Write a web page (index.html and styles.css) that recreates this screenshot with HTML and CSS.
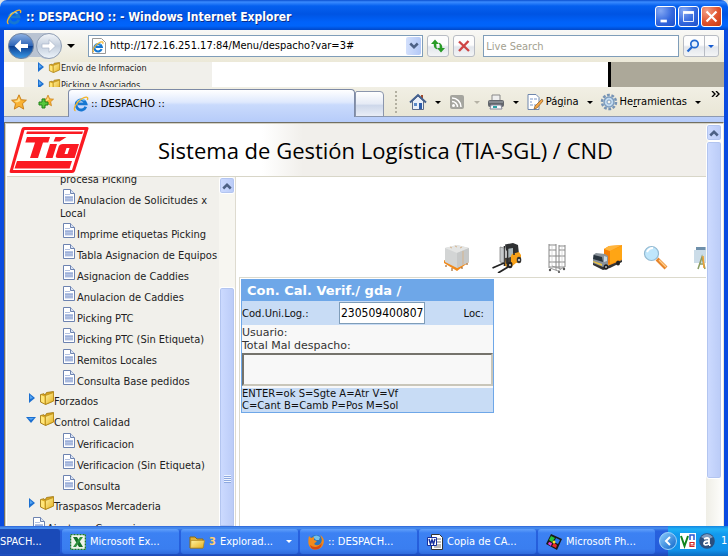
FILE: index.html
```
<!DOCTYPE html>
<html lang="es">
<head>
<meta charset="utf-8">
<title>:: DESPACHO ::</title>
<link rel="stylesheet" href="styles.css">
</head>
<body>
<svg class="defs" aria-hidden="true">
  <defs>
    <linearGradient id="gold" x1="0" y1="0" x2="1" y2="1"><stop offset="0" stop-color="#fff3a0"/><stop offset="1" stop-color="#e5ae1c"/></linearGradient>
    <linearGradient id="navy" x1="0" y1="0" x2="0" y2="1"><stop offset="0" stop-color="#8fb2e4"/><stop offset=".48" stop-color="#2f66b8"/><stop offset=".52" stop-color="#0b3f92"/><stop offset="1" stop-color="#3c9be8"/></linearGradient>
    <linearGradient id="silver" x1="0" y1="0" x2="0" y2="1"><stop offset="0" stop-color="#f3f6fa"/><stop offset=".5" stop-color="#c3cedd"/><stop offset="1" stop-color="#eef5fb"/></linearGradient>
    <linearGradient id="tray" x1="0" y1="0" x2="1" y2="1"><stop offset="0" stop-color="#8fd0ff"/><stop offset="1" stop-color="#0a62c8"/></linearGradient>
    <symbol id="ie" viewBox="0 0 16 16">
      <path d="M12.800 10.800A5 5 0 1 1 13 7.800H5" fill="none" stroke="#1677d2" stroke-width="2.800"/>
      <path d="M4 6.200A5 5 0 0 1 11.500 4.500" fill="none" stroke="#79cbff" stroke-width="1.200"/>
      <path d="M2.500 14.800C-.5 13.500 3 6.500 8.500 3C12.500.3 16 .5 14.300 4" fill="none" stroke="#f2b42c" stroke-width="1.400"/>
    </symbol>
    <symbol id="folder" viewBox="0 0 14 14">
      <path d="M.5 3.500l3.500-.8L5 4l1.500-2.500L13.500.500v9.500l-8 3.500L.5 11z" fill="#d9a520" stroke="#9c7510" stroke-width=".8"/>
      <path d="M5.500 4.500l8-3v8.500l-8 3.300z" fill="url(#gold)" stroke="#b18613" stroke-width=".7"/>
      <path d="M1 4l3.500 1.500V12.500L1 10.500z" fill="#ffe678"/>
    </symbol>
    <symbol id="page" viewBox="0 0 12 15">
      <path d="M.5.500h7l4 4v10H.5z" fill="#fff" stroke="#6d83b0"/>
      <path d="M7.500.500v4h4" fill="#dbe4f4" stroke="#6d83b0"/>
      <path d="M2 7h8v5.500H2z" fill="#b4c3e4"/><path d="M2 5.500h5M2 8.500h8M2 11h8" stroke="#93a7d2" stroke-width=".7"/>
    </symbol>
    <symbol id="right" viewBox="0 0 6 10"><path d="M0 0l6 5-6 5z" fill="#1b6fd0"/><path d="M1 2l3 3-3 1z" fill="#58a6f2"/></symbol>
    <symbol id="down" viewBox="0 0 10 6"><path d="M0 0h10L5 6z" fill="#1b6fd0"/><path d="M2 1h6L5 3z" fill="#58a6f2"/></symbol>
    <symbol id="caret" viewBox="0 0 6 3"><path d="M0 0h6L3 3z" fill="currentColor"/></symbol>
    <symbol id="up" viewBox="0 0 8 6"><path d="M1 5l3-3 3 3" fill="none" stroke="#4d6185" stroke-width="2"/></symbol>
    <symbol id="chevron" viewBox="0 0 8 6"><path d="M1 1l3 3 3-3" fill="none" stroke="#4d6185" stroke-width="2"/></symbol>
    <symbol id="star" viewBox="0 0 16 16"><path d="M8 .8l2.200 4.900 5.200.5-3.900 3.500 1.200 5.400L8 12.300l-4.700 2.800 1.200-5.400L.6 6.200l5.200-.5z" fill="#f9b233" stroke="#c77a10" stroke-width=".9"/><path d="M8 3l1.300 4L6 8.500 3 7l3.400-.5z" fill="#ffe08a"/></symbol>
  </defs>
</svg>

<div class="window">
  <header class="titlebar">
    <svg class="i16"><use href="#ie"/></svg>
    <h1>:: DESPACHO :: - Windows Internet Explorer</h1>
    <div class="winbuttons">
      <button class="wb" aria-label="Minimizar"><svg viewBox="0 0 21 21"><path d="M5 14h7v3H5z" fill="#fff"/></svg></button>
      <button class="wb" aria-label="Maximizar"><svg viewBox="0 0 21 21"><path d="M5 6.500h11v9.500H5z" fill="none" stroke="#fff"/><path d="M4.500 4.500h12v3h-12z" fill="#fff"/></svg></button>
      <button class="wb close" aria-label="Cerrar"><svg viewBox="0 0 21 21"><path d="M5 5l11 11M16 5L5 16" stroke="#fff" stroke-width="2.400"/></svg></button>
    </div>
  </header>

  <div class="chrome">
    <form class="navbar">
      <button type="button" class="travel" aria-label="Atrás y adelante">
        <svg viewBox="0 0 56 28">
          <path d="M14 1h28q6 0 6 13t-6 13-8-2H22q-2 2-8 2z" fill="#b9c3d2"/>
          <circle cx="14" cy="14" r="12.500" fill="url(#navy)" stroke="#71839f"/>
          <path d="M7.500 14l6.500-6.300v4.300h7v4h-7v4.300z" fill="#fff"/>
          <circle cx="42" cy="14" r="12.500" fill="url(#silver)" stroke="#8f9db3"/>
          <path d="M48.500 14L42 7.700V12h-7v4h7v4.300z" fill="#fff" stroke="#aab6c8" stroke-width=".7"/>
        </svg>
      </button>
      <svg class="caret big"><use href="#caret"/></svg>
      <div class="address">
        <svg class="i16" viewBox="0 0 16 16"><path d="M1.500.500h9l4 4v11h-13z" fill="#fff" stroke="#999"/><use href="#ie" x="1" y="3" width="12" height="12"/></svg>
        <input type="text" aria-label="Dirección" value="http://172.16.251.17:84/Menu/despacho?var=3#">
        <button type="button" class="combo" aria-label="Historial"><svg class="chev"><use href="#chevron"/></svg></button>
      </div>
      <button type="button" class="tool" aria-label="Actualizar"><svg class="i16" viewBox="0 0 16 16"><path d="M5 1.500L1 6h2.700q-.2 4.500 3.800 5.500Q6 9.500 6.300 6H9z" fill="#289b27"/><path d="M11 14.500l4-4.500h-2.700q.2-4.500-3.800-5.500Q10 6.500 9.700 10H7z" fill="#289b27"/></svg></button>
      <button type="button" class="tool" aria-label="Detener"><svg class="i16" viewBox="0 0 16 16"><path d="M3 3.500l10 9.500M12.500 3L3 13" stroke="#ce4545" stroke-width="2.400"/></svg></button>
      <input class="search" type="text" aria-label="Buscar" placeholder="Live Search">
      <button type="button" class="tool find" aria-label="Buscar ahora"><svg class="i16" viewBox="0 0 16 16"><circle cx="9.500" cy="6" r="3.700" fill="#e6f0fc" stroke="#2067d0" stroke-width="1.700"/><path d="M7 9l-4.500 4.500" stroke="#2067d0" stroke-width="2.300"/></svg><span><svg class="caret"><use href="#caret"/></svg></span></button>
    </form>

    <div class="residue">
      <ul class="tree">
        <li><svg class="right"><use href="#right"/></svg><svg class="folder"><use href="#folder"/></svg><a href="#">Envío de Informacion</a></li>
        <li><svg class="right"><use href="#right"/></svg><svg class="folder"><use href="#folder"/></svg><a href="#">Picking y Asociados</a></li>
      </ul>
      <div class="blank"></div>
      <div class="grey"></div>
    </div>

    <div class="tabbar">
      <svg class="i16"><use href="#star"/></svg>
      <svg class="i16 plus" viewBox="0 0 16 16"><use href="#star" x="4" y="0" width="12" height="13"/><path d="M4 5h3v3h3v3H7v3H4v-3H1V8h3z" fill="#55c83c" stroke="#21811a"/></svg>
      <button class="tab"><svg class="i16"><use href="#ie"/></svg>:: DESPACHO ::</button>
      <button class="newtab" aria-label="Nueva ficha"></button>
      <div class="commands">
        <button aria-label="Página principal"><svg class="i18" viewBox="0 0 18 18"><path d="M12 2h2v4h-2z" fill="#a34b2a"/><path d="M3.500 8v8.500h11V8L9 3z" fill="#e9eff8" stroke="#5c6b89"/><path d="M1 9.500L9 2l8 7.500" fill="none" stroke="#44618f" stroke-width="2"/><path d="M10 10h3v6h-3z" fill="#2d5ca8"/><path d="M5 10h3v3H5z" fill="#5b8ac8"/></svg><svg class="caret"><use href="#caret"/></svg></button>
        <button class="off" aria-label="Fuentes"><svg class="i18" viewBox="0 0 18 18"><rect x="2" y="2" width="14" height="14" rx="2" fill="#a5a59f"/><circle cx="5.500" cy="12.500" r="1.500" fill="#fff"/><path d="M4 8.500a5.500 5.500 0 0 1 5.500 5.500M4 5a9 9 0 0 1 9 9" fill="none" stroke="#fff" stroke-width="1.500"/></svg><svg class="caret"><use href="#caret"/></svg></button>
        <button aria-label="Imprimir"><svg class="i18" viewBox="0 0 18 18"><path d="M5 2h8v6H5z" fill="#eee" stroke="#888"/><rect x="1" y="7" width="16" height="7" rx="2" fill="#62666c"/><path d="M2 9h14" stroke="#a9adb3"/><path d="M4 12h10l1 4H3z" fill="#f6fafc" stroke="#889"/><path d="M6 14h4" stroke="#2ea2a5" stroke-width="2"/></svg><svg class="caret"><use href="#caret"/></svg></button>
        <button><svg class="i18" viewBox="0 0 18 18"><path d="M2 1.500h8l3 3v12H2z" fill="#fff" stroke="#6f87ad"/><path d="M4 6h3M4 9h2M4 12h3M8 6h3M8 12h2" stroke="#7a97c8"/><path d="M16 6l-7 7-1 3 3-1 6-7z" fill="#f3a64a" stroke="#8d5a1f" stroke-width=".7"/></svg><span>Pá<u>g</u>ina</span><svg class="caret"><use href="#caret"/></svg></button>
        <button><svg class="i18" viewBox="0 0 18 18"><circle cx="9" cy="9" r="7" fill="none" stroke="#7693b4" stroke-width="2.500" stroke-dasharray="2.800 1.600"/><circle cx="9" cy="9" r="5" fill="#c3dbf0" stroke="#7d9dbf" stroke-width="1.500"/><circle cx="9" cy="9" r="2" fill="#f5f5ef" stroke="#7d9dbf"/></svg><span>He<u>r</u>ramientas</span><svg class="caret"><use href="#caret"/></svg></button>
      </div>
      <button class="more" aria-label="Más"><svg viewBox="0 0 9 6"><path d="M1 0l3 3-3 3M5 0l3 3-3 3" fill="none" stroke="#000" stroke-width="1.400"/></svg></button>
    </div>

    <div class="viewport">
      <div class="doc">
        <div class="banner">
          <svg class="logo" viewBox="0 0 80 48" role="img" aria-label="Tía">
            <path d="M15 1h63q2 0 1.400 2L66 45q-.6 2-3 2H2q-2 0-1.300-2L12.500 3q.6-2 2.500-2z" fill="#fb1a22"/>
            <path d="M15.500 4H75.500L63 44H4z" fill="#fff"/>
            <path d="M18 5.500h56l-.8 2.500H17.200z" fill="#fb1a22"/>
            <path d="M8 35h55l-2.400 7.500H5.500z" fill="#fb1a22"/>
            <path d="M18 11h23l-1.800 5.500H34L29 32h-8l5-15.500h-9.700z" fill="#fb1a22"/>
            <path d="M41 18h7l-4.400 14h-7zM44.500 15.500l2-4.500h11l-7 4.500z" fill="#fb1a22"/>
            <path d="M54 18h16l-4.400 14H49q-3 0-2-3l2.700-8.500q.8-2.500 4.300-2.500zM57.500 22l-2 6h3l2-6z" fill="#fb1a22" fill-rule="evenodd"/>
          </svg>
          <h2>Sistema de Gestión Logística (TIA-SGL) / CND</h2>
        </div>
        <div class="frames">
          <nav class="side">
            <ul class="tree menu">
              <li class="leaf cut"><a href="#">procesa Picking</a></li>
              <li class="leaf wrap"><a href="#"><svg class="page"><use href="#page"/></svg>Anulacion de Solicitudes x Local</a></li>
              <li class="leaf"><a href="#"><svg class="page"><use href="#page"/></svg>Imprime etiquetas Picking</a></li>
              <li class="leaf"><a href="#"><svg class="page"><use href="#page"/></svg>Tabla Asignacion de Equipos</a></li>
              <li class="leaf"><a href="#"><svg class="page"><use href="#page"/></svg>Asignacion de Caddies</a></li>
              <li class="leaf"><a href="#"><svg class="page"><use href="#page"/></svg>Anulacion de Caddies</a></li>
              <li class="leaf"><a href="#"><svg class="page"><use href="#page"/></svg>Picking PTC</a></li>
              <li class="leaf"><a href="#"><svg class="page"><use href="#page"/></svg>Picking PTC (Sin Etiqueta)</a></li>
              <li class="leaf"><a href="#"><svg class="page"><use href="#page"/></svg>Remitos Locales</a></li>
              <li class="leaf"><a href="#"><svg class="page"><use href="#page"/></svg>Consulta Base pedidos</a></li>
              <li><svg class="right"><use href="#right"/></svg><svg class="folder"><use href="#folder"/></svg><a href="#">Forzados</a></li>
              <li><svg class="down"><use href="#down"/></svg><svg class="folder"><use href="#folder"/></svg><a href="#">Control Calidad</a></li>
              <li class="leaf"><a href="#"><svg class="page"><use href="#page"/></svg>Verificacion</a></li>
              <li class="leaf"><a href="#"><svg class="page"><use href="#page"/></svg>Verificacion (Sin Etiqueta)</a></li>
              <li class="leaf"><a href="#"><svg class="page"><use href="#page"/></svg>Consulta</a></li>
              <li><svg class="right"><use href="#right"/></svg><svg class="folder"><use href="#folder"/></svg><a href="#">Traspasos Mercaderia</a></li>
              <li class="leaf root"><a href="#"><svg class="page"><use href="#page"/></svg>Ajustes y Correccion</a></li>
            </ul>
            <div class="scroll inner"><button class="arrow" aria-label="Subir"><svg class="chev"><use href="#up"/></svg></button><div class="track"></div><div class="thumb"><i></i></div></div>
          </nav>
          <main>
            <div class="icons">
              <svg viewBox="0 0 30 30"><path d="M2 20l13 8 12-9v-3L15 24 2 17z" fill="#f18a1b"/><path d="M4 22v2M10 25v3M20 24v2M25 20v2" stroke="#8d4b0a"/><path d="M3 5l12-3 12 3v14l-12 6L3 19z" fill="#d3d5d5"/><path d="M3 5l12-3 12 3-12 5z" fill="#e4e5e4"/><path d="M15 10l12-5v14l-12 6z" fill="#c6c8c8"/><path d="M8 4l2 1M13 3l2 1M20 4l-2 1M21 8v14" stroke="#d5b48e"/></svg>
              <svg viewBox="0 0 30 30"><path d="M13 1.500l8-1.500 5 2 1 9-4-1-5 2-4-5z" fill="#2f3133"/><path d="M15 6l6-1v9h-6z" fill="#a9b6ba"/><path d="M20 11l7-2 2 3v7l-5 1-6 5-5-2v-7l5-1z" fill="#f8a118"/><path d="M13 15l6-1v5l-5 2z" fill="#3f3d38"/><path d="M12.500 3v20M15.500 4v21M22 4v8" stroke="#2c2d2e" stroke-width="1.600"/><path d="M8 4l4 1v15l-4-1z" fill="#c6cacc" stroke="#777" stroke-width=".7"/><path d="M12 20L.5 25M16 24L6 30" stroke="#222" stroke-width="1.800"/><ellipse cx="18" cy="22" rx="2.500" ry="3.200" fill="#222"/><ellipse cx="27" cy="17" rx="2.300" ry="3.200" fill="#333"/><circle cx="27" cy="17" r="1.100" fill="#ddd"/><circle cx="18" cy="22" r="1" fill="#ddd"/></svg>
              <svg viewBox="0 0 30 30"><path d="M7 1v24M14 1v26M17 2v23M23 2v22M7 2h7M17 3h6M7 7h7M17 7h6M7 13h16M7 19h16M7 24h16" stroke="#888" fill="none"/><path d="M10 2v22M20 3v20" stroke="#ccc" stroke-width=".7"/><path d="M8 25l8 3 6-4M10 23l9 3" stroke="#999" fill="none"/><circle cx="8" cy="27" r="1.200" fill="#555"/><circle cx="17" cy="29" r="1" fill="#444"/><circle cx="22" cy="26" r="1.200" fill="#555"/></svg>
              <svg viewBox="0 0 30 30"><path d="M12 6l5-3 13-1v15l-12 6-5-3z" fill="#ff930d"/><path d="M18 8l12-5v13l-12 5z" fill="#ffa514"/><path d="M12 6l6 2v13l-6-2z" fill="#f67d04"/><path d="M12 6l5-3 13-1-12 6z" fill="#ffb53c"/><path d="M1 12l3-2 9 1 3 2v11l-6 2-9-5z" fill="#8a929a"/><path d="M2 12l8 2 1 5-10-3z" fill="#29343e"/><path d="M12 13l3 1v4l-3 1z" fill="#c6d6e2"/><path d="M1 18l9 3v2l-9-4z" fill="#f0c33c"/><path d="M1 20l10 4 7-2 12-5v2l-12 6-7 2-10-5z" fill="#353535"/><ellipse cx="14" cy="24" rx="2.300" ry="2.800" fill="#222"/><ellipse cx="26" cy="20" rx="2" ry="2.600" fill="#222"/><circle cx="14" cy="24" r="1" fill="#bbb"/></svg>
              <svg viewBox="0 0 30 30"><path d="M15 16l9 9" stroke="#e7852c" stroke-width="4"/><path d="M17 17l7 7" stroke="#ffcf8a" stroke-width="1.400"/><circle cx="9.500" cy="10.500" r="7" fill="#bfe6fb" stroke="#94bad2" stroke-width="1.200"/><path d="M5 9q2-4 6-4" stroke="#fff" stroke-width="2" fill="none"/></svg>
              <svg viewBox="0 0 30 30"><path d="M4 4h20v14H4z" fill="#a9bed0"/><path d="M2 7h20v13H2z" fill="#cbdce8"/><path d="M4 4h9v3H4z" fill="#6f90ab"/><path d="M6 26l4-12 3 12M7 21h5" stroke="#8a9d63" stroke-width="1.500" fill="none"/><path d="M11 13l1 12" stroke="#f0a13a" stroke-width="1.500"/></svg>
            </div>
            <div class="work">
              <form class="panel">
                <h3>Con. Cal. Verif./ gda /</h3>
                <div class="code"><label for="cod">Cod.Uni.Log.:</label><input id="cod" type="text" value="230509400807"><span>Loc:</span></div>
                <p class="info">Usuario:<br>Total Mal despacho:</p>
                <textarea aria-label="Mensaje"></textarea>
                <p class="help">ENTER=ok S=Sgte A=Atr V=Vf<br>C=Cant B=Camb P=Pos M=Sol</p>
              </form>
            </div>
          </main>
        </div>
      </div>
      <div class="scroll outer"><button class="arrow" aria-label="Subir"><svg class="chev"><use href="#up"/></svg></button><div class="thumb"></div><div class="track"></div></div>
    </div>
  </div>

  <footer class="taskbar">
    <button class="task active">SPACH...</button>
    <button class="task"><svg class="i16" viewBox="0 0 16 16"><path d="M.5.500h15v15H.5z" fill="#eef5ea" stroke="#1c7a2b" stroke-width="1.600" stroke-dasharray="2 1"/><path d="M3 3h4l6 10H9z" fill="#166f27"/><path d="M13 3h-3L3 13h3z" fill="#2f9140"/></svg><span>Microsoft Ex...</span></button>
    <button class="task"><svg class="i16" viewBox="0 0 16 16"><path d="M1 3h5l2 2h6v9H1z" fill="#e0b23a" stroke="#8d6b14"/><path d="M2 6.500h13.500L14 14H1.500z" fill="url(#gold)" stroke="#b38b25" stroke-width=".7"/></svg><b>3</b><span>Explorad...</span><svg class="caret"><use href="#caret"/></svg></button>
    <button class="task"><svg class="i16" viewBox="0 0 16 16"><circle cx="8" cy="8" r="7" fill="#2a74bd"/><path d="M5 3q3-3 7 0l-1 3-3 0z" fill="#77c3ea"/><path d="M1 2l2 2 3-1 0 3 3 1-3 3q4 3 7-1 2-4-1-8 5 3 3.500 8.500T8 15.500 .5 10Q0 5 1 2z" fill="#f08a1c"/><path d="M2 11q6 5 12-2-1 6-6 6.500T2 11z" fill="#d64a12"/></svg><span>:: DESPACH...</span></button>
    <button class="task"><svg class="i16" viewBox="0 0 16 16"><path d="M4.500.500h8l3 3v12h-11z" fill="#fff" stroke="#333"/><path d="M9 5h5M10 8h4M9 11h5M7 13h7" stroke="#777"/><path d="M.5 3.500h9v8h-9z" fill="#fff" stroke="#17309e"/><path d="M2 5l1.500 5L5 6l1.500 4L8 5" fill="none" stroke="#17309e" stroke-width="1.500"/></svg><span>Copia de CA...</span></button>
    <button class="task"><svg class="i16" viewBox="0 0 16 16"><path d="M5 0l11 5-5 11L0 10z" fill="#191919"/><path d="M5 2l4 2-3 4-3-2z" fill="#25c43d"/><path d="M10 4l4 2-2 4-4-2z" fill="#2878ed"/><path d="M3 8l3 1-1 3-3-2z" fill="#e93bd7"/><path d="M8 9l3 2-1 3-4-2z" fill="#e92b27"/><circle cx="8" cy="8" r="1.500" fill="#f7e52e"/></svg><span>Microsoft Ph...</span></button>
    <div class="traybox">
      <button class="expand" aria-label="Mostrar iconos ocultos"><svg viewBox="0 0 18 18"><circle cx="9" cy="9" r="8.500" fill="url(#tray)" stroke="#9cd2fb"/><path d="M11 5L7 9l4 4" fill="none" stroke="#fff" stroke-width="2"/></svg></button>
      <svg class="i16" viewBox="0 0 16 16"><path d="M0 0h16v16H0z" fill="#fff"/><path d="M1 3l3.500 10L8 3" fill="none" stroke="#12851c" stroke-width="2"/><path d="M10 7V2h4v5" fill="none" stroke="#2b57d3" stroke-width="1.500"/><path d="M14.500 9.500H10v4h4.500M14 9v3h-4" fill="none" stroke="#cf2424" stroke-width="1.200"/></svg>
      <svg class="i16" viewBox="0 0 16 16"><circle cx="8" cy="8" r="7.800" fill="#2b4f7e"/><path d="M2 4q6-6 12 0L8 7z" fill="#7f9cc0"/><path d="M5 6q4-2 5 0v6M10 8q-5 0-5 2.500T10 11M10 12h1.500" fill="none" stroke="#fff" stroke-width="1.800"/></svg>
      <time>1</time>
    </div>
  </footer>
</div>
</body>
</html>
```
FILE: styles.css
```
* { box-sizing: border-box; }

body {
  margin: 0;
  background: #dfe3e6;
  color: #000;
  font: 11px/14px "DejaVu Sans Condensed", "DejaVu Sans", sans-serif;
}

button {
  padding: 0;
  border: 0;
  background: none;
  color: inherit;
  font: inherit;
}

input, textarea { font: inherit; border-radius: 0; }
a { color: #222; text-decoration: none; }
svg { display: block; flex: none; }
ul, p, h1, h2, h3 { margin: 0; padding: 0; }

.defs { position: absolute; width: 0; height: 0; }
.i16 { width: 16px; height: 16px; }
.i18 { width: 18px; height: 18px; }
.caret { width: 6px; height: 3px; }
.caret.big { width: 8px; height: 4px; }
.chev { width: 10px; height: 8px; }

.window {
  display: flex;
  flex-direction: column;
  height: 100vh;
  overflow: hidden;
}

/* Title bar */
.titlebar {
  display: flex;
  flex: none;
  align-items: center;
  gap: 4px;
  height: 30px;
  padding: 3px 6px 0 6px;
  border-radius: 7px 7px 0 0;
  background: linear-gradient(#0a4fd0, #3a8bff 2px, #0560ef 6px, #0054e3 14px, #0062fa 22px, #0064fb 26px, #0047c8);
}
.titlebar h1 {
  flex: 1;
  color: #fff;
  font: bold 12px/16px "DejaVu Sans Condensed", "DejaVu Sans", sans-serif;
  text-shadow: 1px 1px #0a2f8c;
  white-space: nowrap;
}
.winbuttons { display: flex; gap: 2px; }
.wb {
  width: 21px;
  height: 21px;
  border: 1px solid #fff;
  border-radius: 3px;
  background: radial-gradient(circle at 25% 20%, #84a8f3, #3468de 55%, #1c4fc9);
}
.wb svg { width: 19px; height: 19px; }
.wb.close { background: radial-gradient(circle at 25% 20%, #f3a086, #e0532e 55%, #c33a12); }

/* Browser chrome */
.chrome {
  display: flex;
  flex: 1;
  flex-direction: column;
  min-height: 0;
  border: solid #0a4be0;
  border-width: 0 4px;
}
.navbar {
  display: flex;
  flex: none;
  align-items: center;
  gap: 4px;
  height: 32px;
  padding: 0 5px 0 3px;
  background: linear-gradient(#f8f8f6, #ece9d8);
}
.travel { width: 56px; height: 28px; }
.travel svg { width: 56px; height: 28px; }
.address {
  display: flex;
  flex: 336;
  align-items: center;
  height: 22px;
  margin-left: 9px;
  padding: 1px 1px 1px 2px;
  border: 1px solid #7f9db9;
  background: #fff;
}
.address input {
  flex: 1;
  min-width: 0;
  padding: 0 3px;
  border: 0;
}
.combo {
  display: grid;
  place-items: center;
  width: 15px;
  height: 18px;
  border-radius: 2px;
  background: linear-gradient(90deg, #d3e0fc, #b3c8f6);
}
.tool {
  display: flex;
  align-items: center;
  justify-content: center;
  width: 22px;
  height: 22px;
  border: 1px solid #b8bcc4;
  border-radius: 3px;
  background: linear-gradient(#fdfdfd 45%, #e2e6ec 55%, #f4f5f6);
}
.tool.find { width: 36px; gap: 3px; }
.find span {
  display: grid;
  place-items: center;
  width: 14px;
  height: 20px;
  border-left: 1px solid #b8bcc4;
  color: #155ad0;
}
.search {
  flex: 193;
  min-width: 0;
  height: 22px;
  margin-left: 4px;
  padding: 0 2px;
  border: 1px solid #7f9db9;
}
.search::placeholder { color: #a39f90; opacity: 1; }

/* Page strip showing between the two toolbars */
.residue {
  display: flex;
  flex: none;
  height: 25px;
  overflow: hidden;
  background: #fff;
}
.residue .tree { width: 188px; margin-left: 20px; padding-left: 14px; background: #f1f0eb; font-size: 9px; }
.residue .tree li { height: 17px; }
.residue .tree a { padding-top: 0; line-height: 12px; }
.residue .right { margin: 0 4px 0 0; }
.residue .folder { width: 13px; height: 11px; }
.blank { flex: 1; }
.grey { width: 116px; border-left: 3px solid #000; background: #aca899; }

.tabbar {
  display: flex;
  flex: none;
  align-items: center;
  height: 35px;
  padding: 0 4px 5px 7px;
  background: linear-gradient(#f1efe4, #e9e6d6 29px, #8d9ab3 29px, #8d9ab3 30px, #bcd0fa 30px, #b6ccfa);
}
.plus { margin-left: 11px; }
.tab {
  display: flex;
  flex: 1;
  align-items: center;
  align-self: flex-end;
  gap: 2px;
  height: 28px;
  margin-left: 14px;
  padding-left: 4px;
  border: 1px solid #7d8aa6;
  border-bottom: 0;
  border-radius: 4px 4px 0 0;
  background: linear-gradient(#fff, #dfe9fd 45%, #c9dafc 55%, #bcd0fa);
  white-space: nowrap;
}
.newtab {
  align-self: flex-end;
  width: 29px;
  height: 26px;
  border: 1px solid #8b96ad;
  border-radius: 2px 4px 0 0;
  background: linear-gradient(#fff, #e5eaf5 50%, #cdd7ea 55%, #e9edf6);
}
.commands {
  display: flex;
  align-items: center;
  gap: 7px;
  margin: 0 10px 0 11px;
  padding-left: 12px;
  border-left: 2px dotted #b3b0a1;
}
.commands button { display: flex; align-items: center; gap: 2px; height: 22px; }
.commands button > .caret { margin-left: 6px; }
.off { color: #b5b2a5; }
.more { align-self: flex-start; margin-top: 4px; }
.more svg { width: 9px; height: 6px; }

/* Document area */
.viewport {
  display: flex;
  flex: 1;
  min-height: 0;
  border: solid #716f64;
  border-width: 1px 1px 0 1px;
  border-right-color: #ece9d8;
  box-shadow: inset 1px 1px #d5d2c4;
  padding: 1px 1px 0 2px;
  background: #fff;
}
.doc { display: flex; flex: 1; flex-direction: column; min-width: 0; }
.banner {
  display: flex;
  flex: none;
  align-items: center;
  height: 53px;
  border-bottom: 1px solid #d8d6c8;
  padding-left: 2px;
  background: linear-gradient(90deg, #fff 255px, #f1efeb 296px);
}
.logo { width: 80px; height: 48px; }
.banner h2 {
  margin-left: 69px;
  font: 22px/30px "Open Sans", "Noto Sans", sans-serif;
  white-space: nowrap;
}
.frames { display: flex; flex: 1; min-height: 0; }

.side {
  display: flex;
  flex: none;
  width: 229px;
  border-right: 1px solid #dedbd0;
  background: #f1f0eb;
}
.tree { list-style: none; }
.tree li { display: flex; height: 21px; white-space: nowrap; }
.tree a { padding-top: 4px; }
.menu { flex: 1; min-width: 0; overflow: hidden; padding-left: 22px; }
.menu .leaf { padding-left: 31px; }
.menu .wrap { height: 34px; white-space: normal; }
.leaf a { display: block; padding: 0; line-height: 13px; }
.leaf .page { display: inline-block; margin: 0 2px 0 3px; vertical-align: baseline; }
.menu .cut { height: 9px; margin-bottom: 3px; align-items: flex-end; }
.menu .root { padding-left: 1px; }
.page { width: 12px; height: 15px; }
.folder { width: 14px; height: 14px; }
.right { width: 6px; height: 10px; margin: 2px 5px 0 0; }
.down { width: 10px; height: 6px; margin: 5px 4px 0 -3px; }

.scroll { display: flex; flex: none; flex-direction: column; width: 16px; background: #f7f6f1; }
.arrow, .thumb {
  border: 1px solid #fff;
  border-radius: 3px;
  background: linear-gradient(90deg, #cddbff, #bacbf7);
  box-shadow: inset 0 0 0 1px #b3c5f0;
}
.arrow { display: grid; flex: none; place-items: center; height: 17px; }
.outer { background: linear-gradient(90deg, #efeee6, #fdfdfb); }
.outer .thumb { flex: 340; }
.outer .track { flex: 47; }
.inner .track { flex: 107; }
.inner .thumb { display: grid; flex: 224; place-items: end center; padding-bottom: 43px; border-bottom: 0; border-radius: 3px 3px 0 0; }
.thumb i { width: 7px; height: 8px; background: repeating-linear-gradient(#eef4fe 0 1px, #8ea9e0 1px 2px); }

main { display: flex; flex: 1; flex-direction: column; min-width: 0; padding-left: 3px; background: #fff; }
.icons {
  display: flex;
  flex: none;
  align-items: flex-end;
  justify-content: flex-end;
  gap: 20px;
  height: 101px;
  padding-bottom: 4px;
  overflow: hidden;
  border-bottom: 1px solid #dcdacd;
}
.icons svg { width: 30px; height: 30px; }
.icons svg:last-child { margin-right: -16px; }
.work { flex: 1; padding: 1px; border-left: 1px solid #dcdacd; }
.panel {
  width: 253px;
  border: 1px solid #6ea7e8;
  background: #f8f8f8;
  color: #333;
  font: 11px/13px "DejaVu Sans", sans-serif;
}
.panel h3 {
  padding-left: 5px;
  background: #6ea7e8;
  color: #fff;
  font: bold 13px/21px "DejaVu Sans", sans-serif;
}
.code {
  display: grid;
  grid-template-columns: 97px 86px 1fr;
  align-items: center;
  height: 24px;
  padding-right: 9px;
  background: #c8dcf5;
  color: #111;
  font-size: 10px;
}
.code span { justify-self: end; }
.code input {
  width: 86px;
  height: 22px;
  padding: 0 1px;
  border: 1px solid #7f9db9;
  font: 12px "DejaVu Sans Condensed", sans-serif;
}
.info { padding: 1px 0; }
textarea {
  display: block;
  width: 100%;
  height: 33px;
  border: 2px inset #c9c6ba;
  background: #f8f8f8;
  resize: none;
}
.help { margin-top: 2px; background: #c8dcf5; color: #111; font-size: 10px; line-height: 12px; }

/* Taskbar */
.taskbar {
  display: flex;
  flex: none;
  gap: 2px;
  height: 30px;
  background: linear-gradient(#2c63d8, #4a92f0 2px, #2861de 5px, #245ddb 25px, #1b48b4);
  color: #fff;
}
.task {
  display: flex;
  flex: 0 1 117px;
  align-items: center;
  gap: 4px;
  min-width: 0;
  height: 25px;
  margin-top: 3px;
  padding: 0 6px 0 8px;
  border-radius: 3px;
  background: linear-gradient(#62a0fa, #3c81f3 4px, #3a7ef0 20px, #2f6bdc);
  white-space: nowrap;
}
.task.active { flex: 1; padding: 0; border-radius: 0 3px 3px 0; background: #1a4ab8; }
.task b { color: #ffcf70; }
.task .caret { margin-left: auto; }
.traybox {
  display: flex;
  flex: none;
  align-items: center;
  gap: 3px;
  width: 60px;
  margin-left: 11px;
  background: linear-gradient(#1585e0, #1fb1f6 3px, #129aee 8px, #1192ea 24px, #0c6cc0);
}
.expand { flex: none; width: 18px; margin-left: -9px; }
.expand svg { width: 18px; height: 18px; }
.traybox time { margin-left: 3px; }
```
